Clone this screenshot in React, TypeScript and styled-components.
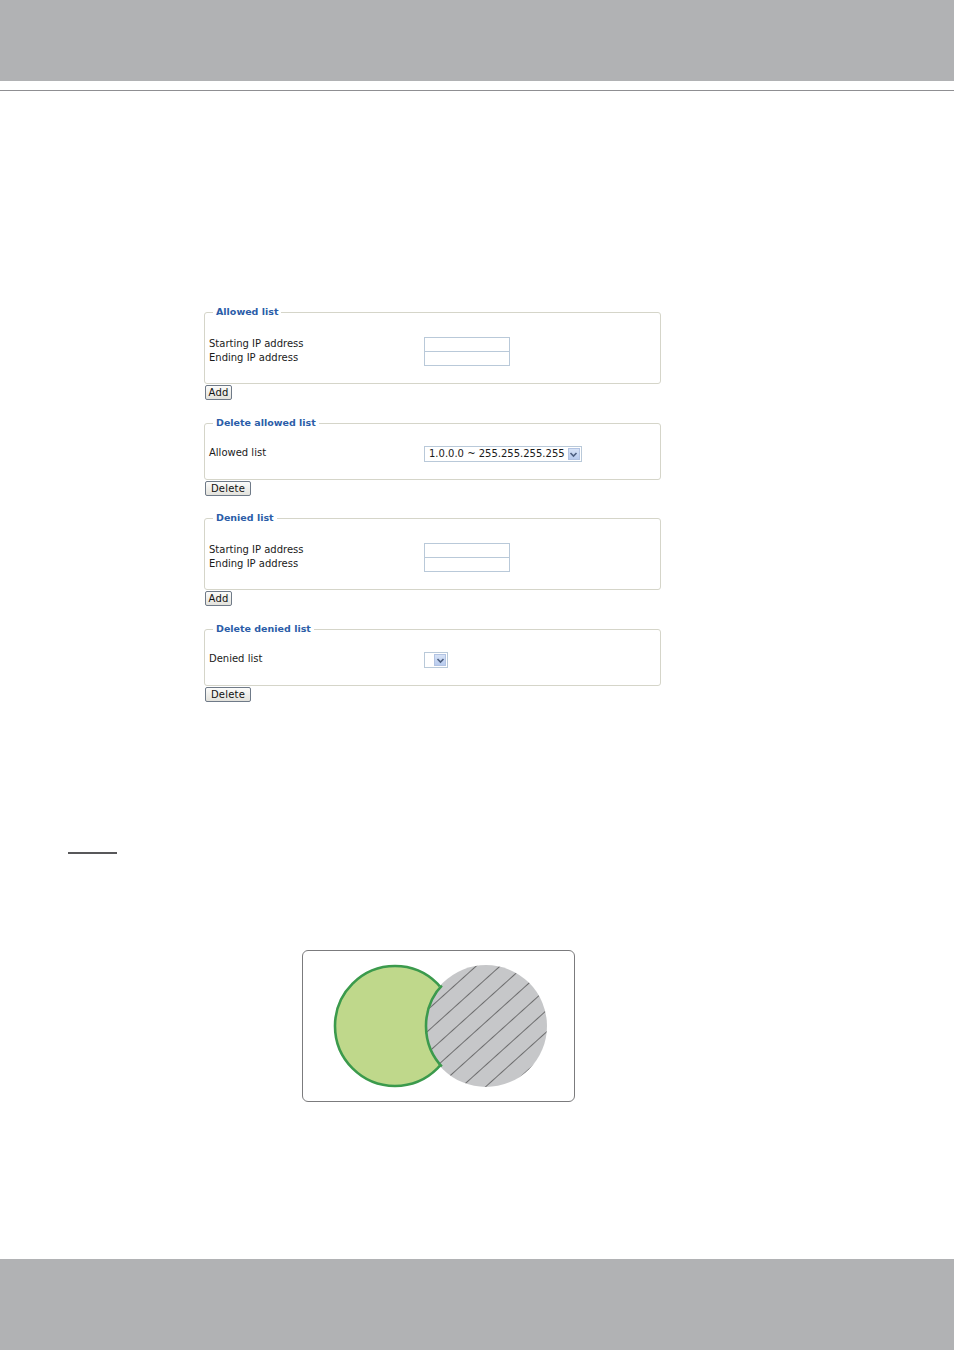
import React from 'react';
import styled, { createGlobalStyle } from 'styled-components';

const GlobalStyle = createGlobalStyle`
    html, body {
        margin: 0;
        padding: 0;
        background: #ffffff;
    }
    body {
        font-family: "DejaVu Sans", Verdana, sans-serif;
    }
`

type RangeFormProps = {
    title: string;
    top: number;
}

type ListFormProps = {
    title: string;
    label: string;
    value?: string;
    top: number;
}

const RangeForm = (props: RangeFormProps) => {
    return (
        <Block $top={props.top}>
            <Fieldset>
                <Legend>{props.title}</Legend>
                <Row>
                    <Label>Starting IP address</Label>
                    <Field />
                </Row>
                <Row>
                    <Label>Ending IP address</Label>
                    <Field $joined />
                </Row>
            </Fieldset>
            <Button $width={27}>Add</Button>
        </Block>
    );
};

const ListForm = (props: ListFormProps) => {
    return (
        <Block $top={props.top}>
            <Fieldset $compact>
                <Legend>{props.title}</Legend>
                <Row>
                    <Label>{props.label}</Label>
                    <Select>
                        {props.value && <SelectText>{props.value}</SelectText>}
                        {!props.value && <SelectBlank />}
                        <SelectArrow>
                            <svg width="9" height="7" viewBox="0 0 9 7">
                                <path d="M1.5 2 L4.5 5 L7.5 2" fill="none" stroke="#4d5f80" strokeWidth="1.6" />
                            </svg>
                        </SelectArrow>
                    </Select>
                </Row>
            </Fieldset>
            <Button $width={46}>Delete</Button>
        </Block>
    );
};

const Venn = () => {
    return (
        <Figure>
            <svg width="272" height="151" viewBox="0 0 272 151">
                <defs>
                    <pattern id="hatch" patternUnits="userSpaceOnUse" width="16" height="16" patternTransform="rotate(48)">
                        <rect width="16" height="16" fill="#c6c7c9" />
                        <line x1="0" y1="0" x2="0" y2="16" stroke="#222222" strokeWidth="1.1" />
                    </pattern>
                    <clipPath id="green-clip">
                        <circle cx="93" cy="76" r="62" />
                    </clipPath>
                </defs>
                <circle cx="93" cy="76" r="60" fill="#bfd88b" stroke="#3b9a4c" strokeWidth="2.6" />
                <circle cx="184" cy="76" r="61" fill="url(#hatch)" />
                <circle cx="184" cy="76" r="60" fill="none" stroke="#3b9a4c" strokeWidth="2.6" clipPath="url(#green-clip)" />
            </svg>
        </Figure>
    );
};

export default function App() {
    return (
        <Page>
            <GlobalStyle />
            <Header />
            <Rule />
            <Main>
                <Forms>
                    <RangeForm title="Allowed list" top={0} />
                    <ListForm title="Delete allowed list" label="Allowed list" value="1.0.0.0 ~ 255.255.255.255" top={17} />
                    <RangeForm title="Denied list" top={16} />
                    <ListForm title="Delete denied list" label="Denied list" top={17} />
                </Forms>
                <NoteMark />
                <Venn />
            </Main>
            <Footer />
        </Page>
    );
}

const Page = styled.div`
    width: 954px;
    height: 1350px;
    display: flex;
    flex-direction: column;
    overflow: hidden;
`

const Header = styled.div`
    height: 81px;
    background-color: #b1b2b4;
`

const Rule = styled.div`
    height: 1px;
    margin-top: 9px;
    background-color: #8f8f92;
`

const Main = styled.div`
    flex: 1;
    display: flex;
    flex-direction: column;
`

const Forms = styled.div`
    margin: 215px 0 0 204px;
    width: 457px;
    display: flex;
    flex-direction: column;
`

const Block = styled.div<{ $top: number }>`
    margin-top: ${(p) => p.$top}px;
    display: flex;
    flex-direction: column;
    align-items: flex-start;
`

const Fieldset = styled.fieldset<{ $compact?: boolean }>`
    box-sizing: border-box;
    width: 457px;
    margin: 0;
    padding: ${(p) => (p.$compact ? '17px 4px 17px 4px' : '19px 4px 17px 4px')};
    border: 1px solid #d5d5c9;
    border-radius: 3px;
    min-inline-size: 0;
`

const Legend = styled.legend`
    margin-left: 4px;
    padding: 0 3px;
    font-size: 9.5px;
    line-height: 12px;
    font-weight: bold;
    color: #2b5da8;
`

const Row = styled.div`
    display: grid;
    grid-template-columns: 215px auto;
    align-items: center;
`

const Label = styled.span`
    font-size: 10px;
    line-height: 12px;
    color: #1a1a1a;
    padding-bottom: 2px;
    white-space: nowrap;
`

const Field = styled.div<{ $joined?: boolean }>`
    box-sizing: border-box;
    width: 86px;
    height: 15px;
    margin-top: ${(p) => (p.$joined ? '-1px' : '0')};
    border: 1px solid #b9c9d9;
    background: #ffffff;
`

const Select = styled.div`
    box-sizing: border-box;
    height: 16px;
    display: inline-flex;
    justify-self: start;
    align-items: stretch;
    border: 1px solid #b9c9d9;
    background: #ffffff;
`

const SelectText = styled.span`
    font-size: 10px;
    line-height: 14px;
    padding: 0 2px 0 4px;
    color: #1a1a1a;
    white-space: nowrap;
`

const SelectBlank = styled.span`
    width: 8px;
`

const SelectArrow = styled.span`
    width: 12px;
    display: flex;
    align-items: center;
    justify-content: center;
    margin: 1px;
    background: linear-gradient(#d6e2f6, #b8cbee);
    border: 1px solid #b2c3e2;
    box-sizing: border-box;
`

const Button = styled.button<{ $width: number }>`
    box-sizing: border-box;
    width: ${(p) => p.$width}px;
    height: 15px;
    margin: 1px 0 0 1px;
    padding: 0;
    font-family: "DejaVu Sans", Verdana, sans-serif;
    font-size: 10px;
    line-height: 12px;
    letter-spacing: 0.2px;
    color: #111111;
    border: 1px solid #6f7a88;
    border-radius: 2px;
    background: linear-gradient(#fcfcfb, #e3e2dc);
`

const NoteMark = styled.div`
    width: 49px;
    height: 2px;
    margin: 150px 0 0 68px;
    background-color: #58585a;
`

const Figure = styled.div`
    box-sizing: border-box;
    width: 273px;
    height: 152px;
    margin: 96px 0 0 302px;
    border: 1.3px solid #7b7b7d;
    border-radius: 6px;
    overflow: hidden;
    svg {
        display: block;
        margin: -1px;
    }
`

const Footer = styled.div`
    height: 91px;
    background-color: #b1b2b4;
`
